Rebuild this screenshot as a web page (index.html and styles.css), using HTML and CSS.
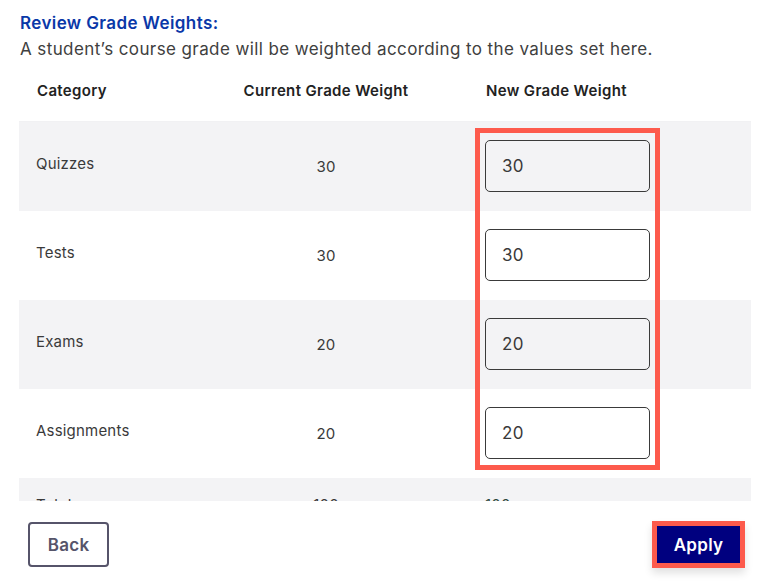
FILE: index.html
```html
<!DOCTYPE html>
<html lang="en">
<head>
<meta charset="utf-8">
<title>Review Grade Weights</title>
<link rel="stylesheet" href="styles.css">
</head>
<body>
<div class="page">
  <main class="content">
    <h2 class="title">Review Grade Weights:</h2>
    <p class="subtitle">A student’s course grade will be weighted according to the values set here.</p>
    <div class="table">
      <div class="row head">
        <div class="cell cat">Category</div>
        <div class="cell cur">Current Grade Weight</div>
        <div class="cell new">New Grade Weight</div>
      </div>
      <div class="row body shaded">
        <div class="cell cat">Quizzes</div>
        <div class="cell cur">30</div>
        <div class="cell new"><input class="weight" type="text" value="30"></div>
      </div>
      <div class="row body">
        <div class="cell cat">Tests</div>
        <div class="cell cur">30</div>
        <div class="cell new"><input class="weight" type="text" value="30"></div>
      </div>
      <div class="row body shaded">
        <div class="cell cat">Exams</div>
        <div class="cell cur">20</div>
        <div class="cell new"><input class="weight" type="text" value="20"></div>
      </div>
      <div class="row body">
        <div class="cell cat">Assignments</div>
        <div class="cell cur">20</div>
        <div class="cell new"><input class="weight" type="text" value="20"></div>
      </div>
      <div class="row total shaded">
        <div class="cell cat">Total</div>
        <div class="cell cur">100</div>
        <div class="cell new total-new">100</div>
      </div>
    </div>
    <div class="highlight"></div>
  </main>
  <footer class="footer">
    <button class="btn back" type="button">Back</button>
    <button class="btn apply" type="button">Apply</button>
  </footer>
</div>
</body>
</html>
```

FILE: styles.css
```css
* { box-sizing: border-box; }

html, body {
  margin: 0;
  padding: 0;
  background: #ffffff;
}

body {
  font-family: Inter, "Noto Sans", "Liberation Sans", sans-serif;
  color: #3a3a3a;
}

.page {
  width: 758px;
  height: 582px;
  display: flex;
  flex-direction: column;
}

.content {
  position: relative;
  height: 501px;
  overflow: hidden;
  padding: 12px 7px 0 19px;
}

.title {
  margin: 0 0 0 1px;
  font-size: 17px;
  line-height: 22px;
  font-weight: 600;
  letter-spacing: 0.4px;
  color: #0a38a8;
}

.subtitle {
  margin: 3px 0 0 1px;
  font-size: 17px;
  line-height: 24px;
  font-weight: 400;
  letter-spacing: 0.4px;
  color: #404040;
  white-space: nowrap;
}

.table {
  display: flex;
  flex-direction: column;
}

.row {
  display: grid;
  grid-template-columns: 200px 214px 1fr;
  align-items: center;
}

.row.head {
  height: 61px;
  border-bottom: 1px solid #f1f1f3;
  color: #222222;
}

.row.body {
  height: 89px;
}

.row.total {
  height: 56px;
  align-items: start;
  padding-top: 17px;
}

.shaded {
  background: #f3f3f5;
}

.cell {
  font-size: 15px;
  line-height: 20px;
  letter-spacing: 0.2px;
}

.row.head .cell {
  font-weight: 600;
  letter-spacing: 0.35px;
}

.cell.cat {
  padding-left: 17px;
}

.row.body .cell.cat {
  padding-bottom: 5px;
}

.row.head .cell.cat { padding-left: 18px; }

.cell.cur {
  text-align: center;
}

.cell.new {
  padding-left: 52px;
}

.row.head .cell.new { padding-left: 53px; }

.total-new {
  padding-left: 63px;
  color: #2f4a3f;
}

.weight {
  display: block;
  width: 165px;
  height: 52px;
  margin-top: -2px;
  padding: 0 0 0 16px;
  border: 1px solid #3a3a3a;
  border-radius: 5px;
  background: transparent;
  font-family: inherit;
  font-size: 17px;
  letter-spacing: 0.3px;
  color: #3a3a3a;
  outline: none;
}

.highlight {
  position: absolute;
  left: 475px;
  top: 128px;
  width: 185px;
  height: 342px;
  border: 5px solid #fd5a4c;
  pointer-events: none;
}

.footer {
  flex: 1;
  display: flex;
  justify-content: space-between;
  align-items: flex-start;
  padding: 20px 13px 0 28px;
}

.btn {
  font-family: inherit;
  font-size: 17px;
  font-weight: 600;
  letter-spacing: 0.3px;
  cursor: pointer;
}

.back {
  margin-top: 1px;
  width: 81px;
  height: 45px;
  border: 2px solid #56546a;
  border-radius: 4px;
  background: #ffffff;
  color: #56546a;
}

.apply {
  width: 93px;
  height: 47px;
  border: 5px solid #fd5a4c;
  background: #00007f;
  color: #ffffff;
  box-shadow: 0 5px 8px rgba(0, 0, 0, 0.12);
}
```
